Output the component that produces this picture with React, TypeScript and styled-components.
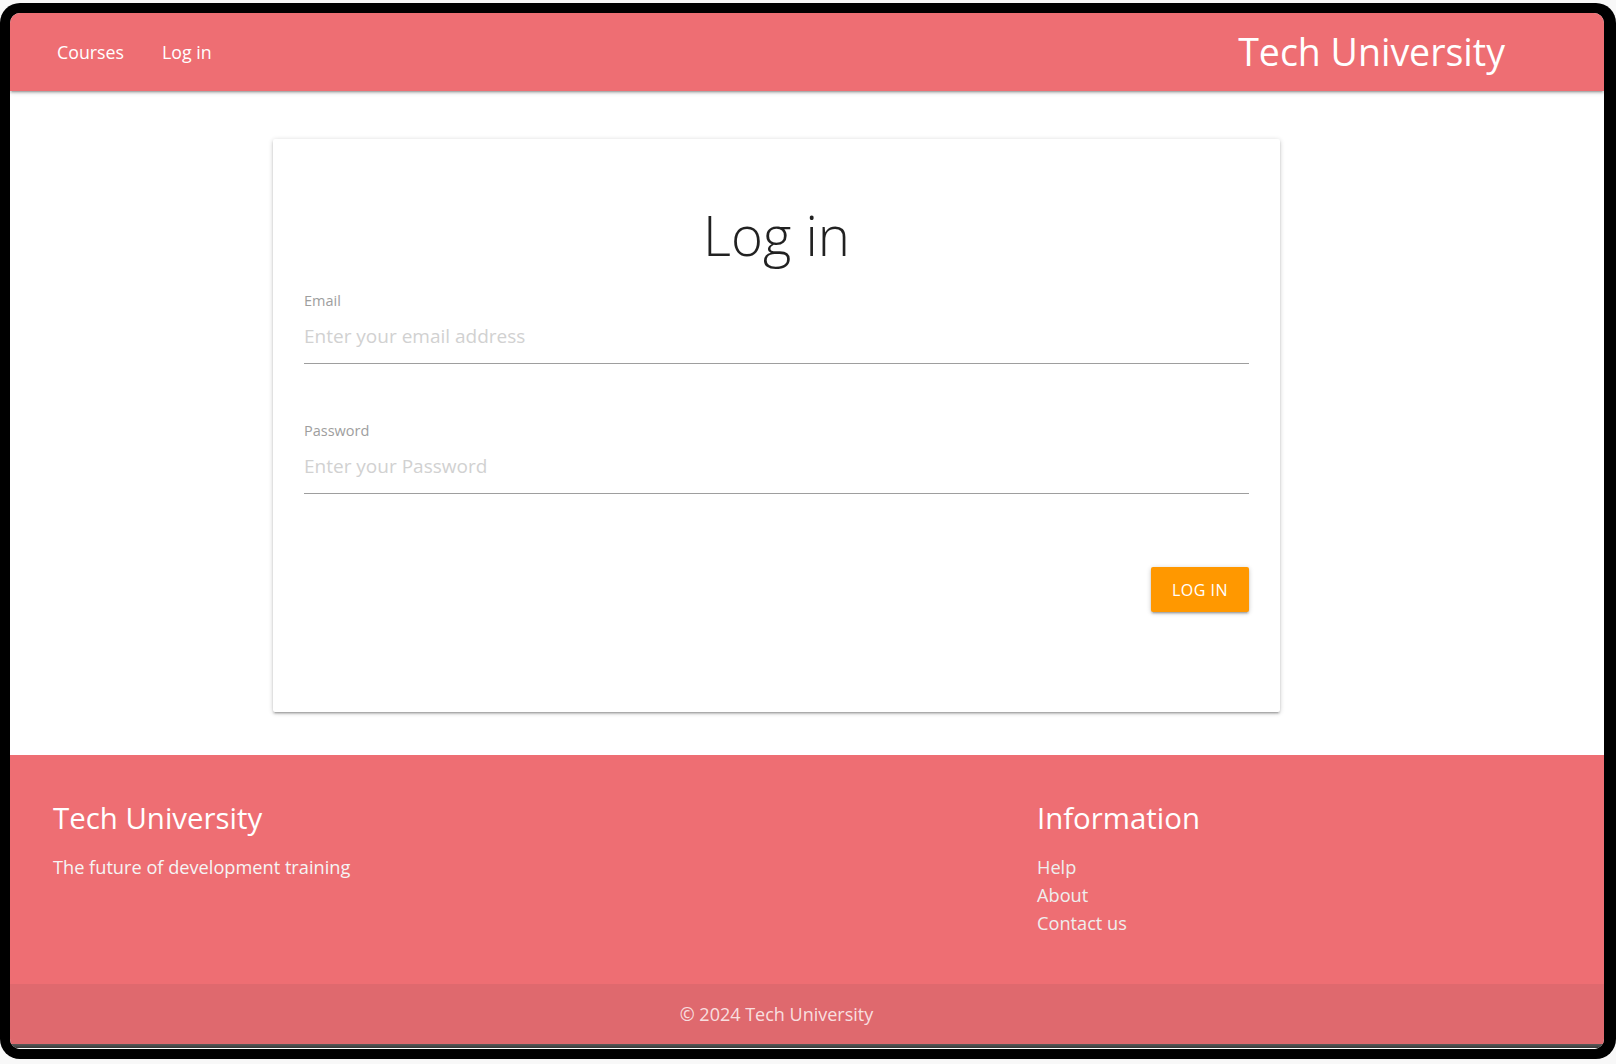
import React from "react";
import styled, { createGlobalStyle } from "styled-components";

const GlobalStyle = createGlobalStyle`
  html, body {
    margin: 0;
    padding: 0;
    background: #f8f8f8;
  }
  body {
    font-family: "Open Sans", "Noto Sans", sans-serif;
    padding-top: 3px;
  }
  * { box-sizing: border-box; }
`;

const Frame = styled.div`
  width: 1616px;
  height: 1056px;
  background: #000;
  border-radius: 20px;
  padding: 10px 12px 10px 10px;
`;

const Screen = styled.div`
  height: 100%;
  background: #fff;
  border-radius: 10px;
  overflow: hidden;
  display: flex;
  flex-direction: column;
`;

const Nav = styled.nav`
  height: 78px;
  flex: none;
  background: #ee6e73;
  display: flex;
  align-items: center;
  justify-content: space-between;
  box-shadow: 0 2px 2px 0 rgba(0, 0, 0, 0.14), 0 3px 1px -2px rgba(0, 0, 0, 0.12),
    0 1px 5px 0 rgba(0, 0, 0, 0.2);
  position: relative;
  z-index: 1;
`;

const NavLinks = styled.ul`
  list-style: none;
  margin: 0;
  padding: 0 0 0 28px;
  display: flex;
`;

const NavLink = styled.a`
  display: block;
  padding: 0 19px;
  color: #fff;
  font-size: 17.8px;
  line-height: 78px;
  text-decoration: none;
`;

const Brand = styled.a`
  color: #fff;
  font-size: 37.5px;
  line-height: 78px;
  padding-right: 99px;
  text-decoration: none;
`;

const Main = styled.main`
  flex: none;
  padding: 48px 0 43px;
`;

const Container = styled.div`
  width: 1007px;
  margin-left: 263px;
`;

const Card = styled.section`
  background: #fff;
  border-radius: 2px;
  height: 573px;
  padding: 30px 31px 0 31px;
  box-shadow: 0 2px 2px 0 rgba(0, 0, 0, 0.14), 0 3px 1px -2px rgba(0, 0, 0, 0.12),
    0 1px 5px 0 rgba(0, 0, 0, 0.2);
  display: flex;
  flex-direction: column;
`;

const Title = styled.h1`
  margin: 40px 0 0;
  font-size: 54.5px;
  line-height: 52px;
  font-weight: 300;
  text-align: center;
  color: rgba(0, 0, 0, 0.87);
`;

const Field = styled.div<{ $gap: number }>`
  margin-top: ${(p) => p.$gap}px;
  display: flex;
  flex-direction: column;
`;

const Label = styled.label`
  font-size: 14.5px;
  line-height: 16px;
  color: #9e9e9e;
`;

const Input = styled.input`
  height: 55px;
  border: none;
  border-bottom: 1px solid #9e9e9e;
  outline: none;
  padding: 0;
  font-family: inherit;
  font-size: 19px;
  color: rgba(0, 0, 0, 0.87);
  background: transparent;
  &::placeholder {
    color: #d1d1d1;
  }
`;

const Actions = styled.div`
  margin-top: 73px;
  display: flex;
  justify-content: flex-end;
`;

const Button = styled.button`
  width: 98px;
  height: 45px;
  border: none;
  border-radius: 2px;
  background: #ff9800;
  color: #fff;
  font-family: inherit;
  font-size: 16px;
  letter-spacing: 0.5px;
  text-transform: uppercase;
  box-shadow: 0 2px 2px 0 rgba(0, 0, 0, 0.14), 0 3px 1px -2px rgba(0, 0, 0, 0.12),
    0 1px 5px 0 rgba(0, 0, 0, 0.2);
  cursor: pointer;
`;

const Footer = styled.footer`
  flex: none;
  height: 229px;
  background: #ee6e73;
  padding: 45px 0 0 43px;
  display: grid;
  grid-template-columns: 984px 1fr;
`;

const FooterCol = styled.div`
  display: flex;
  flex-direction: column;
`;

const FooterHeading = styled.h5`
  margin: 0 0 17px;
  font-size: 29.4px;
  line-height: 36px;
  font-weight: 400;
  color: #fff;
`;

const FooterText = styled.p`
  margin: 0;
  font-size: 18.2px;
  line-height: 28px;
  color: #f5f5f5;
`;

const FooterLink = styled.a`
  font-size: 18.2px;
  line-height: 28px;
  color: #eeeeee;
  text-decoration: none;
`;

const Copyright = styled.div`
  flex: none;
  height: 60px;
  background: #df696e;
  display: flex;
  align-items: center;
`;

const CopyrightText = styled(Container)`
  text-align: center;
  font-size: 18px;
  color: rgba(255, 255, 255, 0.8);
`;

const BottomStrip = styled.div`
  flex: none;
  height: 4px;
  background: linear-gradient(#5a5a5a, #3a3a3a);
  border-bottom: 2px solid #fff;
  box-sizing: content-box;
`;

export default function App() {
  return (
    <>
      <GlobalStyle />
      <Frame>
        <Screen>
          <Nav>
            <NavLinks>
              <li>
                <NavLink href="#">Courses</NavLink>
              </li>
              <li>
                <NavLink href="#">Log in</NavLink>
              </li>
            </NavLinks>
            <Brand href="#">Tech University</Brand>
          </Nav>
          <Main>
            <Container>
              <Card>
                <Title>Log in</Title>
                <Field $gap={32}>
                  <Label>Email</Label>
                  <Input type="email" placeholder="Enter your email address" />
                </Field>
                <Field $gap={59}>
                  <Label>Password</Label>
                  <Input type="password" placeholder="Enter your Password" />
                </Field>
                <Actions>
                  <Button>Log in</Button>
                </Actions>
              </Card>
            </Container>
          </Main>
          <Footer>
            <FooterCol>
              <FooterHeading>Tech University</FooterHeading>
              <FooterText>The future of development training</FooterText>
            </FooterCol>
            <FooterCol>
              <FooterHeading>Information</FooterHeading>
              <FooterLink href="#">Help</FooterLink>
              <FooterLink href="#">About</FooterLink>
              <FooterLink href="#">Contact us</FooterLink>
            </FooterCol>
          </Footer>
          <Copyright>
            <CopyrightText>© 2024 Tech University</CopyrightText>
          </Copyright>
          <BottomStrip />
        </Screen>
      </Frame>
    </>
  );
}
